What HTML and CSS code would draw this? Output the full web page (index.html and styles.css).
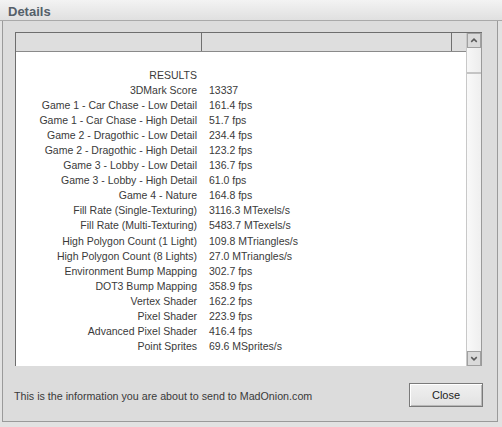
FILE: index.html
```html
<!DOCTYPE html>
<html>
<head>
<meta charset="utf-8">
<link rel="stylesheet" href="styles.css">
</head>
<body>
<div class="window">
  <div class="titlebar">Details</div>
  <div class="frame">
    <div class="listbox">
      <div class="list-main">
        <div class="header">
          <div class="hcell hcell-1"></div>
          <div class="hcell hcell-2"></div>
          <div class="hcell hcell-3"></div>
        </div>
        <div class="rows">
          <div class="label">RESULTS</div><div class="value"></div>
          <div class="label">3DMark Score</div><div class="value">13337</div>
          <div class="label">Game 1 - Car Chase - Low Detail</div><div class="value">161.4 fps</div>
          <div class="label">Game 1 - Car Chase - High Detail</div><div class="value">51.7 fps</div>
          <div class="label">Game 2 - Dragothic - Low Detail</div><div class="value">234.4 fps</div>
          <div class="label">Game 2 - Dragothic - High Detail</div><div class="value">123.2 fps</div>
          <div class="label">Game 3 - Lobby - Low Detail</div><div class="value">136.7 fps</div>
          <div class="label">Game 3 - Lobby - High Detail</div><div class="value">61.0 fps</div>
          <div class="label">Game 4 - Nature</div><div class="value">164.8 fps</div>
          <div class="label">Fill Rate (Single-Texturing)</div><div class="value">3116.3 MTexels/s</div>
          <div class="label">Fill Rate (Multi-Texturing)</div><div class="value">5483.7 MTexels/s</div>
          <div class="label">High Polygon Count (1 Light)</div><div class="value">109.8 MTriangles/s</div>
          <div class="label">High Polygon Count (8 Lights)</div><div class="value">27.0 MTriangles/s</div>
          <div class="label">Environment Bump Mapping</div><div class="value">302.7 fps</div>
          <div class="label">DOT3 Bump Mapping</div><div class="value">358.9 fps</div>
          <div class="label">Vertex Shader</div><div class="value">162.2 fps</div>
          <div class="label">Pixel Shader</div><div class="value">223.9 fps</div>
          <div class="label">Advanced Pixel Shader</div><div class="value">416.4 fps</div>
          <div class="label">Point Sprites</div><div class="value">69.6 MSprites/s</div>
        </div>
      </div>
      <div class="scrollbar">
        <div class="sb-btn sb-up">
          <svg width="13" height="15" viewBox="0 0 13 15"><path d="M3.5 9 L6.5 6 L9.5 9" fill="none" stroke="#5a5a5a" stroke-width="1.6"/></svg>
        </div>
        <div class="sb-thumb"></div>
        <div class="sb-track"></div>
        <div class="sb-btn sb-down">
          <svg width="13" height="15" viewBox="0 0 13 15"><path d="M3.5 6 L6.5 9 L9.5 6" fill="none" stroke="#5a5a5a" stroke-width="1.6"/></svg>
        </div>
      </div>
    </div>
    <div class="footer">
      <div class="info">This is the information you are about to send to MadOnion.com</div>
      <button class="close-btn">Close</button>
    </div>
  </div>
</div>
</body>
</html>
```

FILE: styles.css
```css
html, body {
  margin: 0;
  padding: 0;
  background: #d9d9d9;
}
body {
  width: 502px;
  height: 427px;
  overflow: hidden;
  font-family: "Liberation Sans", Arial, sans-serif;
}
.window {
  width: 502px;
  height: 427px;
  display: flex;
  flex-direction: column;
  background: #e2e2e2;
}
.titlebar {
  height: 21px;
  box-sizing: border-box;
  padding: 4px 0 0 8px;
  font-size: 13px;
  font-weight: bold;
  color: #55606a;
  background: linear-gradient(#f3f3f3, #e0e0e0);
  border-bottom: 1px solid #a9a9a9;
}
.frame {
  margin: 0 4px 4px 2px;
  height: 401px;
  box-sizing: border-box;
  border-left: 1px solid #9a9a9a;
  border-right: 1px solid #9a9a9a;
  border-bottom: 1px solid #9a9a9a;
  background: #dcdcdc;
  padding: 11px 15px 0 12px;
  display: flex;
  flex-direction: column;
}
.listbox {
  height: 333px;
  display: flex;
  border-top: 1px solid #6e6e6e;
  border-left: 1px solid #6e6e6e;
  background: #fff;
}
.list-main {
  flex: 1;
  display: flex;
  flex-direction: column;
}
.header {
  height: 18px;
  display: flex;
  background: #dedede;
  border-bottom: 1px solid #8a8a8a;
}
.hcell {
  box-sizing: border-box;
  border-right: 1px solid #707070;
  height: 18px;
}
.hcell-1 { width: 186px; }
.hcell-2 { width: 250px; }
.hcell-3 { flex: 1; border-right: none; }
.rows {
  display: grid;
  grid-template-columns: 186px 1fr;
  padding-top: 16px;
  font-size: 10.5px;
  line-height: 15.05px;
  color: #3a3a3a;
}
.label {
  text-align: right;
  padding-right: 5px;
  white-space: nowrap;
}
.value {
  padding-left: 7px;
  white-space: nowrap;
}
.scrollbar {
  width: 14px;
  display: flex;
  flex-direction: column;
  background: #f4f4f4;
  border-left: 1px solid #c8c8c8;
  border-right: 1px solid #9a9a9a;
}
.sb-btn {
  height: 15px;
  background: #dadada;
  border: 1px solid #a0a0a0;
  box-sizing: border-box;
  display: flex;
  align-items: center;
  justify-content: center;
}
.sb-btn svg { display: block; }
.sb-thumb {
  height: 26px;
  background: linear-gradient(to right, #f7f7f7, #ececec);
  border-bottom: 2px solid #c4c4c4;
  box-sizing: border-box;
}
.sb-track {
  flex: 1;
  background: linear-gradient(to right, #f9f9f9, #efefef);
}
.footer {
  flex: 1;
  display: flex;
  align-items: center;
  justify-content: space-between;
  margin-right: -1px;
}
.info {
  font-size: 10.7px;
  color: #3a3a3a;
  margin-left: -1px;
  margin-top: 5px;
}
.close-btn {
  width: 74px;
  height: 24px;
  margin-top: 3px;
  font-family: "Liberation Sans", Arial, sans-serif;
  font-size: 11px;
  color: #222;
  background: linear-gradient(#f0f0f0, #e2e2e2);
  border: 1px solid #7a7a7a;
  box-shadow: inset 1px 1px 0 #ffffff, inset -1px -1px 0 #b8b8b8;
  padding: 0;
}
```
